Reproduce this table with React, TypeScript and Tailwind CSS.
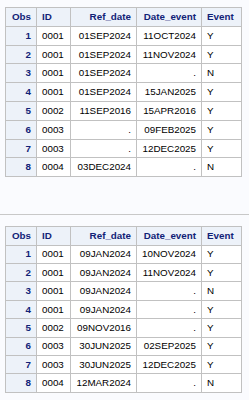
import React from "react";

type Row = [string, string, string, string, string];

const first: Row[] = [
  ["1", "0001", "01SEP2024", "11OCT2024", "Y"],
  ["2", "0001", "01SEP2024", "11NOV2024", "Y"],
  ["3", "0001", "01SEP2024", ".", "N"],
  ["4", "0001", "01SEP2024", "15JAN2025", "Y"],
  ["5", "0002", "11SEP2016", "15APR2016", "Y"],
  ["6", "0003", ".", "09FEB2025", "Y"],
  ["7", "0003", ".", "12DEC2025", "Y"],
  ["8", "0004", "03DEC2024", ".", "N"],
];

const second: Row[] = [
  ["1", "0001", "09JAN2024", "10NOV2024", "Y"],
  ["2", "0001", "09JAN2024", "11NOV2024", "Y"],
  ["3", "0001", "09JAN2024", ".", "N"],
  ["4", "0001", "09JAN2024", ".", "Y"],
  ["5", "0002", "09NOV2016", ".", "Y"],
  ["6", "0003", "30JUN2025", "02SEP2025", "Y"],
  ["7", "0003", "30JUN2025", "12DEC2025", "Y"],
  ["8", "0004", "12MAR2024", ".", "N"],
];

const th = "border border-[#c1c1c1] bg-[#edf2f9] font-bold text-[#112277] px-[5px]";
const td = "border border-[#c1c1c1] bg-white text-black px-[5px]";

const DataTable = ({ rows, rowH }: { rows: Row[]; rowH: string }) => (
  <table className="table-fixed border-collapse w-[236px] text-[9.8px] leading-none">
    <colgroup>
      <col className="w-[31px]" />
      <col className="w-[34px]" />
      <col className="w-[66px]" />
      <col className="w-[65px]" />
      <col className="w-[40px]" />
    </colgroup>
    <thead>
      <tr className={rowH}>
        <th className={`${th} text-right`}>Obs</th>
        <th className={`${th} text-left`}>ID</th>
        <th className={`${th} text-right`}>Ref_date</th>
        <th className={`${th} text-right`}>Date_event</th>
        <th className={`${th} text-left`}>Event</th>
      </tr>
    </thead>
    <tbody>
      {rows.map((r) => (
        <tr key={r[0]} className={rowH}>
          <th className={`${th} text-right`}>{r[0]}</th>
          <td className={`${td} text-left`}>{r[1]}</td>
          <td className={`${td} text-right`}>{r[2]}</td>
          <td className={`${td} text-right`}>{r[3]}</td>
          <td className={`${td} text-left`}>{r[4]}</td>
        </tr>
      ))}
    </tbody>
  </table>
);

export default function App() {
  return (
    <div className="w-[249px] h-[400px] bg-[#fafbfe] overflow-hidden font-['Liberation_Sans',Arial,sans-serif]">
      <div className="pt-[7px] pl-[5px]">
        <DataTable rows={first} rowH="h-[18.8px]" />
      </div>
      <div className="mt-[37px] h-px bg-[#c8c8c8]" />
      <div className="pt-[11px] pl-[5px]">
        <DataTable rows={second} rowH="h-[18.4px]" />
      </div>
    </div>
  );
}
